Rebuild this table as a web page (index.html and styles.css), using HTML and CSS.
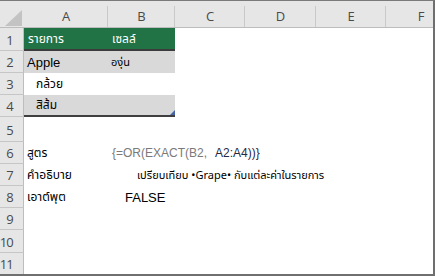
FILE: index.html
```html
<!DOCTYPE html>
<html lang="th">
<head>
<meta charset="utf-8">
<link rel="stylesheet" href="styles.css">
</head>
<body>
<div class="sheet">
  <div class="row head">
    <div class="corner"><svg width="24" height="26" viewBox="0 0 24 26"><polygon points="5,25 22,25 22,9" fill="#c3c3c3"/></svg></div>
    <div class="ch">A</div>
    <div class="ch">B</div>
    <div class="ch">C</div>
    <div class="ch">D</div>
    <div class="ch">E</div>
    <div class="ch ch-f">F</div>
  </div>
  <div class="row r1">
    <div class="rh">1</div>
    <div class="c green"><span class="th white">รายการ</span></div>
    <div class="c green"><span class="th white">เซลล์</span></div>
    <div class="c"></div><div class="c"></div><div class="c"></div><div class="c"></div>
  </div>
  <div class="row r2">
    <div class="rh">2</div>
    <div class="c band"><span class="latin">Apple</span></div>
    <div class="c band"><span class="th small">องุ่น</span></div>
    <div class="c"></div><div class="c"></div><div class="c"></div><div class="c"></div>
  </div>
  <div class="row r3">
    <div class="rh">3</div>
    <div class="c"><span class="th indent">กล้วย</span></div>
    <div class="c"></div>
    <div class="c"></div><div class="c"></div><div class="c"></div><div class="c"></div>
  </div>
  <div class="row r4">
    <div class="rh">4</div>
    <div class="c band last"><span class="th indent">สิส้ม</span></div>
    <div class="c band last handle-cell"><span class="handle"></span></div>
    <div class="c"></div><div class="c"></div><div class="c"></div><div class="c"></div>
  </div>
  <div class="row r5">
    <div class="rh">5</div>
    <div class="c"></div><div class="c"></div><div class="c"></div><div class="c"></div><div class="c"></div><div class="c"></div>
  </div>
  <div class="row r6">
    <div class="rh">6</div>
    <div class="c"><span class="th">สูตร</span></div>
    <div class="c"><span class="formula">{=OR(EXACT(B2,</span><span class="formula-ref">A2:A4))}</span></div>
    <div class="c"></div><div class="c"></div><div class="c"></div><div class="c"></div>
  </div>
  <div class="row r7">
    <div class="rh">7</div>
    <div class="c"><span class="th">คำอธิบาย</span></div>
    <div class="c"><span class="th desc">เปรียบเทียบ •Grape• กับแต่ละค่าในรายการ</span></div>
    <div class="c"></div><div class="c"></div><div class="c"></div><div class="c"></div>
  </div>
  <div class="row r8">
    <div class="rh">8</div>
    <div class="c"><span class="th">เอาต์พุต</span></div>
    <div class="c"><span class="latin result">FALSE</span></div>
    <div class="c"></div><div class="c"></div><div class="c"></div><div class="c"></div>
  </div>
  <div class="row r9">
    <div class="rh">9</div>
    <div class="c"></div><div class="c"></div><div class="c"></div><div class="c"></div><div class="c"></div><div class="c"></div>
  </div>
  <div class="row r10">
    <div class="rh">10</div>
    <div class="c"></div><div class="c"></div><div class="c"></div><div class="c"></div><div class="c"></div><div class="c"></div>
  </div>
  <div class="row r11">
    <div class="rh">11</div>
    <div class="c"></div><div class="c"></div><div class="c"></div><div class="c"></div><div class="c"></div><div class="c"></div>
  </div>
</div>
</body>
</html>
```
FILE: styles.css
```css
* { box-sizing: border-box; }
html, body { margin: 0; padding: 0; background: #fff; }
.sheet {
  width: 435px;
  height: 276px;
  overflow: hidden;
  border-top: 1px solid #7a7a7a;
  border-right: 2px solid #6f6f6f;
  border-bottom: 2px solid #6f6f6f;
  background: #fff;
  font-family: "Liberation Sans", Arial, sans-serif;
}
.row {
  display: grid;
  grid-template-columns: 24px 84px 67px 70px 71px 70px 70px;
  height: 22px;
}
.head { height: 27px; background: #e6e6e6; border-bottom: 1px solid #bcbcbc; }
.corner { display: flex; align-items: flex-start; }
.corner svg { display: block; }
.ch {
  display: flex;
  align-items: center;
  justify-content: center;
  padding-top: 4px;
  font-family: "Open Sans", "Noto Sans", sans-serif;
  font-size: 13px;
  color: #4a4a4a;
  background: linear-gradient(#c9c9c9, #c9c9c9) right bottom / 1px 21px no-repeat;
}
.r1 { height: 23px; }
.r5 { height: 25px; }
.r10 { height: 23px; }
.rh {
  display: flex;
  align-items: center;
  justify-content: flex-end;
  padding-right: 10px;
  padding-top: 1px;
  background: #e6e6e6;
  border-right: 1px solid #bdbdbd;
  border-bottom: 1px solid #c6c6c6;
  font-family: "Open Sans", "Noto Sans", sans-serif;
  font-size: 13px;
  color: #4a4a4a;
  letter-spacing: -0.8px;
}
.c {
  display: flex;
  align-items: center;
  white-space: nowrap;
  overflow: visible;
  padding-left: 3px;
  color: #000;
  position: relative;
}
.green { background: #217346; border-bottom: 2px solid #3c3c3c; }
.band { background: #d9d9d9; }
.last { border-bottom: 2px solid #3f3f3f; }
.th {
  font-family: "Noto Sans Thai", "Tahoma", "DejaVu Sans", "Liberation Sans", sans-serif;
  font-size: 12px;
  color: #000;
}
.white { color: #fff; padding-left: 1px; }
.small { font-size: 11px; }
.indent { padding-left: 9px; }
.latin { font-size: 13px; color: #000; }
.formula { font-size: 12px; color: #7a7a7a; padding-left: 1px; }
.formula-ref { font-size: 12px; color: #1f2a44; padding-left: 8px; }
.desc { font-size: 11px; padding-left: 26px; }
.result { padding-left: 14px; }
.handle {
  position: absolute;
  right: 0;
  bottom: 0;
  width: 0;
  height: 0;
  border-left: 5px solid transparent;
  border-bottom: 5px solid #4564a8;
}
```
